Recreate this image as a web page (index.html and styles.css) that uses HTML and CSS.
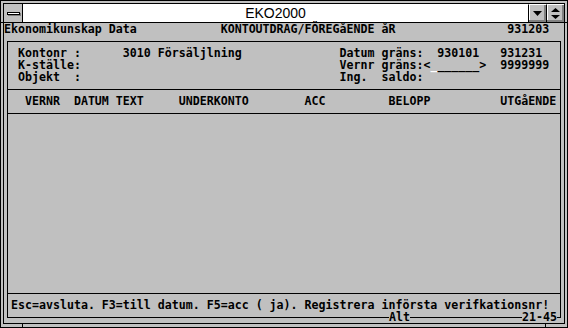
FILE: index.html
```
<!DOCTYPE html>
<html lang="sv">
<head>
  <meta charset="UTF-8">
  <title>EKO2000</title>
  <link rel="stylesheet" href="styles.css">
</head>
<body>
  <div class="window">
    <div class="frame">
      <div class="titlebar">
        <div class="sysmenu"><span class="sysmenu-bar"></span></div>
        <div class="caption">EKO2000</div>
        <div class="tbtn">
          <svg width="9" height="5" viewBox="0 0 9 5"><polygon points="0,0 9,0 4.5,5" fill="#000"/></svg>
        </div>
        <div class="tbtn">
          <svg width="9" height="11" viewBox="0 0 9 11"><polygon points="4.5,0 9,4 0,4" fill="#000"/><polygon points="0,7 9,7 4.5,11" fill="#000"/></svg>
        </div>
      </div>

      <!-- DOS-skärmen, 80x25 tecken -->
      <div class="screen">
        <div class="line">Ekonomikunskap Data            KONTOUTDRAG/FÖREGåENDE åR                931203</div>
        <div class="box">
          <div class="section head">
            <div class="line"> Kontonr :      3010 Försäljlning              Datum gräns:  930101   931231</div>
            <div class="line"> K-ställe:                                     Vernr gräns:&lt;<span class="cursor">_</span>______&gt;  9999999</div>
            <div class="line"> Objekt  :                                     Ing.  saldo:</div>
          </div>
          <div class="section cols">
            <div class="line">  VERNR  DATUM TEXT     UNDERKONTO        ACC         BELOPP          UTGåENDE</div>
          </div>
          <div class="section rows"></div>
          <div class="section status">
            <div class="line">Esc=avsluta. F3=till datum. F5=acc ( ja). Registrera införsta verifkationsnr!</div>
          </div>
          <span class="label label-alt">Alt</span>
          <span class="label label-pos">21-45</span>
        </div>
      </div>
    </div>
    <span class="notch notch-tl"></span>
    <span class="notch notch-tr"></span>
    <span class="notch notch-bl"></span>
    <span class="notch notch-br"></span>
  </div>
</body>
</html>
```
FILE: styles.css
```
body, html {
  margin: 0;
  padding: 0;
  background: #c0c0c0;
}

.window {
  position: relative;
  width: 568px;
  height: 328px;
  box-sizing: border-box;
  border: 1px solid #000;
  padding: 2px 2px 3px 2px;
  background: #c0c0c0;
}

.frame {
  height: 100%;
  box-sizing: border-box;
  border: 1px solid #000;
  display: flex;
  flex-direction: column;
}

/* titelrad */
.titlebar {
  height: 18px;
  display: flex;
  background: #fff;
  border-bottom: 1px solid #000;
}

.sysmenu {
  width: 18px;
  border-right: 1px solid #000;
  background: #c0c0c0;
  display: flex;
  align-items: center;
  justify-content: center;
}

.sysmenu-bar {
  width: 11px;
  height: 1px;
  border: 1px solid #000;
  background: #fff;
  box-shadow: 1px 1px 0 #808080;
}

.caption {
  flex: 1;
  text-align: center;
  font-family: "Liberation Sans", Arial, sans-serif;
  font-size: 14px;
  line-height: 18px;
  color: #000;
}

.tbtn {
  width: 15px;
  height: 16px;
  border-left: 1px solid #000;
  background: #c0c0c0;
  border-top: 1px solid #fff;
  box-shadow: inset -2px -2px 0 #808080, inset 1px 0 0 #fff;
  display: flex;
  align-items: center;
  justify-content: center;
  padding: 0 1px 1px 1px;
}

/* textskärm */
.screen {
  width: 560px;
  height: 300px;
  display: flex;
  flex-direction: column;
  background: #c0c0c0;
  color: #000;
  font-family: "DejaVu Sans Mono", "Liberation Mono", monospace;
  font-weight: bold;
  font-size: 11.627px;
  line-height: 12px;
}

.line {
  height: 12px;
  white-space: pre;
}

.box {
  position: relative;
  flex: 1;
  margin: 6px 3px 5px 3px;
  border: 1px solid #000;
  display: flex;
  flex-direction: column;
}

.section {
  padding: 5px 0 6px 3px;
  border-bottom: 1px solid #000;
}

.section.rows {
  flex: 1;
  padding: 0;
}

.section.status {
  border-bottom: none;
}

.cursor {
  color: #fff;
}

.label {
  position: absolute;
  bottom: -6px;
  height: 12px;
  white-space: pre;
  background: #c0c0c0;
}

.label-alt {
  left: 381px;
}

.label-pos {
  left: 514px;
}

/* hörnmarkeringar i ramen */
.notch {
  position: absolute;
  background: #000;
}

.notch-tl {
  left: -1px;
  top: 21px;
  width: 4px;
  height: 1px;
}

.notch-tr {
  right: -1px;
  top: 21px;
  width: 4px;
  height: 1px;
}

.notch-bl {
  left: 21px;
  bottom: -1px;
  width: 1px;
  height: 4px;
}

.notch-br {
  right: 21px;
  bottom: -1px;
  width: 1px;
  height: 4px;
}
```
